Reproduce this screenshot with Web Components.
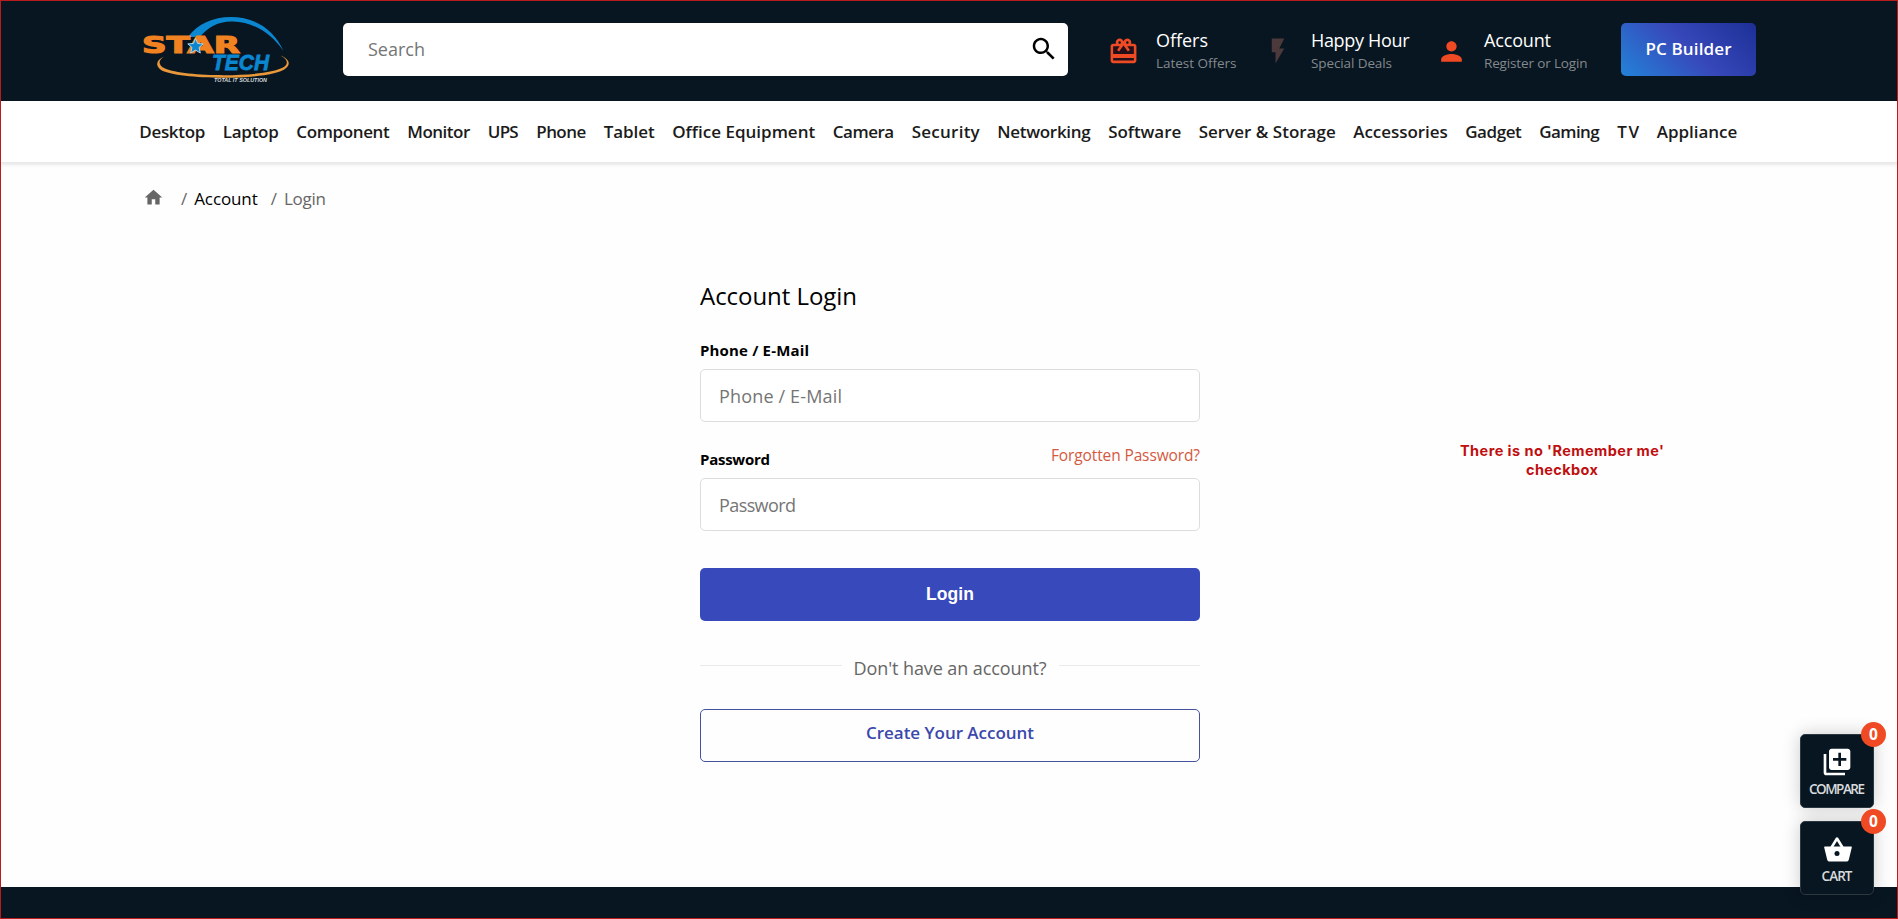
<!DOCTYPE html>
<html lang="en">
<head>
<meta charset="utf-8">
<title>Account Login</title>
<style>
body{margin:0;font-family:"Open Sans","Noto Sans",sans-serif;color:#000;background:#fefefe}
</style>
</head>
<body>
<site-page></site-page>
<script>
function define(name, html, setup){
  const t=document.createElement('template');
  t.innerHTML=html;
  customElements.define(name, class extends HTMLElement{
    connectedCallback(){
      if(this.shadowRoot) return;
      this.attachShadow({mode:'open'}).appendChild(t.content.cloneNode(true));
      if(setup) setup(this,this.shadowRoot);
    }
  });
}

define('site-logo',`<style>:host{display:block;width:155px;height:80px}svg{display:block}</style>
<svg width="155" height="80" viewBox="140 10 155 80">
 <path d="M188 37C197 24 213 17 231 17C254 17 274 29 283.500 51C271 33 253 22 233 21.500C218 21 207 28 200 37Z" fill="#0b86d1"/>
 <path d="M164 56.500C156 60 155 66 161 70C178 80 268 81 285 69C291 65 290 59 280.500 55.500C289 60 288 64.500 283 67.500C264 78 184 77 165 68.500C158 65 158 60.500 164 56.500Z" fill="#e8973a"/>
 <text x="142" y="52.800" font-family="DejaVu Sans" font-weight="bold" font-size="23.500" textLength="98" lengthAdjust="spacingAndGlyphs" fill="#f08222" stroke="#f08222" stroke-width="1.200">STAR</text>
 <path d="M195.500 38.500l2.200 5 5.500.4-4.200 3.600 1.300 5.500-4.800-2.900-4.800 2.900 1.300-5.500-4.200-3.600 5.500-.4z" fill="#0b86d1" stroke="#b8d4e6" stroke-width="1"/>
 <text x="212" y="69.500" font-family="Liberation Sans" font-weight="bold" font-style="italic" font-size="21.500" textLength="57" lengthAdjust="spacingAndGlyphs" fill="#0b86d1" stroke="#0b86d1" stroke-width=".8">TECH</text>
 <text x="214" y="81.800" font-family="Liberation Sans" font-weight="bold" font-style="italic" font-size="5.800" textLength="53" lengthAdjust="spacingAndGlyphs" fill="#d5d9dc">TOTAL IT SOLUTION</text>
</svg>`);

define('search-box',`<style>
:host{display:flex;box-sizing:border-box;width:725px;height:53px;background:#fff;border-radius:5px;padding:0 9px 0 25px;align-items:center;justify-content:space-between;color:#757575;font-size:18px}
fit-text{margin-top:-1px}svg{display:block;margin-top:-1px}</style>
<fit-text w="57">Search</fit-text>
<svg width="30" height="30" viewBox="0 0 24 24"><path d="M15.500 14h-.79l-.28-.27C15.410 12.590 16 11.110 16 9.500 16 5.910 13.090 3 9.500 3S3 5.910 3 9.500 5.910 16 9.500 16c1.610 0 3.090-.59 4.230-1.570l.27.28v.79l5 4.990L20.490 19l-4.990-5zm-6 0C7.010 14 5 11.990 5 9.500S7.010 5 9.500 5 14 7.010 14 9.500 11.990 14 9.500 14z"/></svg>`);

define('header-action',`<style>
:host{display:flex;height:53px;color:#fff}
.icon{flex:none;width:48px;padding-top:13px}
.text{display:flex;flex-direction:column;align-items:flex-start}
.title{font-size:18px;line-height:22px;height:22px;margin-top:6px;font-weight:500}
.sub{font-size:13.500px;line-height:18px;height:18px;margin-top:3px;color:#84898d}
</style><div class="icon"><slot name="icon"></slot></div>
<div class="text"><div class="title"><slot name="title"></slot></div><div class="sub"><slot></slot></div></div>`);

define('site-header',`<style>
:host{display:flex;height:100px;background:#081621;padding-left:139px}
site-logo{margin-top:9px}
search-box{margin:22px 0 0 48px}
header-action{margin-top:22px}
.offers{margin-left:40px;width:155px}.happy{width:173px}.acct{width:185px}
svg{display:block}
.pc{margin-top:22px;width:135px;height:53px;border-radius:5px;background:linear-gradient(45deg,#2383d8 0%,#3749bb 50%,#1d2f96 100%);color:#fff;font-weight:600;font-size:17px;line-height:51px;text-align:center}
</style>
<site-logo></site-logo><search-box></search-box>
<header-action class="offers"><svg slot="icon" width="31" height="31" viewBox="0 0 24 24" fill="#ef4a23"><path d="M4 8h16v6H4zM4 17h16v2H4z" fill="#24101a"/><path d="M20 6h-2.180c.11-.31.18-.65.18-1 0-1.660-1.340-3-3-3-1.050 0-1.960.54-2.500 1.350l-.5.67-.5-.68C10.960 2.540 10.050 2 9 2 7.340 2 6 3.340 6 5c0 .35.07.69.18 1H4c-1.110 0-1.990.89-1.990 2L2 19c0 1.110.89 2 2 2h16c1.110 0 2-.89 2-2V8c0-1.110-.89-2-2-2zm-5-2c.55 0 1 .45 1 1s-.45 1-1 1-1-.45-1-1 .45-1 1-1zM9 4c.55 0 1 .45 1 1s-.45 1-1 1-1-.45-1-1 .45-1 1-1zm11 15H4v-2h16v2zm0-5H4V8h5.080L7 10.830 8.620 12 11 8.760l1-1.360 1 1.360L15.380 12 17 10.830 14.920 8H20v6z"/></svg><fit-text slot="title" w="52">Offers</fit-text><fit-text w="80.5">Latest Offers</fit-text></header-action>
<header-action class="happy"><svg slot="icon" width="30" height="30" viewBox="0 0 24 24" fill="#4b393b"><path d="M7 2v11h3v9l7-12h-4l4-8z"/></svg><fit-text slot="title" w="98.5">Happy Hour</fit-text><fit-text w="81">Special Deals</fit-text></header-action>
<header-action class="acct"><svg slot="icon" width="31" height="31" viewBox="0 0 24 24" fill="#ef4a23"><path d="M12 12c2.210 0 4-1.790 4-4s-1.790-4-4-4-4 1.790-4 4 1.790 4 4 4zm0 2c-2.670 0-8 1.340-8 4v2h16v-2c0-2.660-5.330-4-8-4z"/></svg><fit-text slot="title" w="67">Account</fit-text><fit-text w="103.5">Register or Login</fit-text></header-action>
<div class="pc"><fit-text w="86">PC Builder</fit-text></div>`);

define('site-nav',`<style>
:host{display:flex;height:62px;box-sizing:border-box;padding-left:138.300px;gap:17.500px;background:#fff;border-bottom:1px solid #e9e9e9;box-shadow:0 2px 3px rgba(0,0,0,.09);font-size:17px;line-height:62px;font-weight:600;color:#1b1b1b}
</style>`,(host,root)=>{
  const items=[['Desktop',66],['Laptop',56],['Component',93.5],['Monitor',63],['UPS',31],['Phone',50],['Tablet',51],['Office Equipment',143],['Camera',61.5],['Security',68],['Networking',93.5],['Software',73],['Server & Storage',137],['Accessories',94.5],['Gadget',56.5],['Gaming',60.5],['TV',22],['Appliance',80.5]];
  for(const [label,w] of items){
    const e=document.createElement('fit-text');
    e.setAttribute('w',w);e.textContent=label;root.appendChild(e);
  }
});

define('bread-crumb',`<style>
:host{display:flex;align-items:center;height:24px;margin-top:23px;padding-left:141px;font-size:17px;line-height:24px;color:#666}
svg{display:block;margin:-1px 17px 0 1px}span{padding-top:1px}.a{color:#000;margin:0 13px 0 7px}.b{margin-left:7px}
</style>
<svg width="21" height="21" viewBox="0 0 24 24" fill="#666"><path d="M10 20v-6h4v6h5v-8h3L12 3 2 12h3v8z"/></svg>
<span>/</span><span class="a"><fit-text w="63.5">Account</fit-text></span><span>/</span><span class="b"><fit-text w="42">Login</fit-text></span>`);

define('form-field',`<style>
:host{display:block}
.top{display:flex;justify-content:space-between;height:20px;font-size:15px;line-height:19px;font-weight:700}
.box{box-sizing:border-box;height:53px;border:1px solid #ddd;border-radius:5px;margin-top:8px;padding-left:18px;font-size:18px;line-height:52px;color:#757575;background:#fff}
</style><div class="top"><slot name="label"></slot><slot name="aside"></slot></div><div class="box"><slot></slot></div>`);

define('login-form',`<style>
:host{display:block;width:500px;margin:70px 0 0 699px}
h1{margin:0;font-weight:400;font-size:24px;line-height:32px;height:32px}
.f1{margin-top:29px}.f2{margin-top:28px}
.forgot{font-weight:400;font-size:15.500px;color:#d4593e;margin-top:-4px}
.login{height:53px;margin-top:37px;border-radius:5px;background:#3749bb;color:#fff;text-align:center;font:bold 17.500px/52px "Liberation Sans",sans-serif}
.or{display:flex;margin-top:34px;height:26px;font-size:18px;line-height:26px;color:#666;gap:12px}
.or i{flex:1;height:1px;background:#eaeaea;margin-top:10px}
.create{box-sizing:border-box;height:53px;margin-top:28px;border:1px solid #46539c;border-radius:5px;text-align:center;font-weight:600;font-size:17px;line-height:46px;color:#3b48ac}
</style>
<h1><fit-text w="157">Account Login</fit-text></h1>
<form-field class="f1"><fit-text slot="label" w="109">Phone / E-Mail</fit-text><fit-text w="123">Phone / E-Mail</fit-text></form-field>
<form-field class="f2"><fit-text slot="label" w="70">Password</fit-text><fit-text slot="aside" class="forgot" w="149">Forgotten Password?</fit-text><fit-text w="77">Password</fit-text></form-field>
<div class="login"><fit-text w="48">Login</fit-text></div>
<div class="or"><i></i><fit-text w="193">Don't have an account?</fit-text><i></i></div>
<div class="create"><fit-text w="168">Create Your Account</fit-text></div>`);

define('side-note',`<style>
:host{position:absolute;left:1440px;top:441px;width:244px;text-align:center;font:bold 14.500px/19px Inter,"Liberation Sans",sans-serif;color:#c00f0f}
div{height:19px}</style>
<div><fit-text w="204">There is no 'Remember me'</fit-text></div><div><fit-text w="72">checkbox</fit-text></div>`);

define('float-button',`<style>
:host{position:relative;display:flex;flex-direction:column;align-items:center;box-sizing:border-box;width:74px;height:74px;background:#081621;border:1px solid #2b3842;border-radius:5px;box-shadow:0 0 18px rgba(0,0,0,.2);color:#d8dbdd;font-size:13.500px;font-weight:600;line-height:20px;padding-top:11px}
.label{height:20px;margin-top:1px}
.badge{position:absolute;right:-13px;top:-13px;width:25px;height:25px;border-radius:50%;background:#ef4a23;color:#fff;font-weight:700;font-size:15.500px;line-height:25px;text-align:center}
</style><slot name="icon"></slot><div class="label"><slot></slot></div><div class="badge">0</div>`);

define('float-tools',`<style>
:host{position:absolute;left:1800px;top:734px;display:flex;flex-direction:column;gap:13px}
svg{display:block}</style>
<float-button><svg slot="icon" width="32" height="32" viewBox="0 0 24 24" fill="#fff"><path d="M4 6H2v14c0 1.100.9 2 2 2h14v-2H4V6zm16-4H8c-1.100 0-2 .9-2 2v12c0 1.100.9 2 2 2h12c1.100 0 2-.9 2-2V4c0-1.100-.9-2-2-2zm-1 9h-4v4h-2v-4H9V9h4V5h2v4h4v2z"/></svg><fit-text w="56">COMPARE</fit-text></float-button>
<float-button><svg slot="icon" width="32" height="32" viewBox="0 0 32 32"><path d="M2 13.500h28c.6 0 .9.500.8 1l-3 12.200c-.3 1.100-1.200 1.800-2.300 1.800h-17c-1.100 0-2-.7-2.300-1.800l-3-12.200c-.1-.5.200-1 .8-1z" fill="#fff"/><path d="M10.500 14.500L16 5.500l5.500 9" fill="none" stroke="#fff" stroke-width="2.600" stroke-linejoin="round"/><circle cx="16" cy="20.500" r="2.500" fill="#081621"/></svg><fit-text w="31">CART</fit-text></float-button>`);

define('site-page',`<style>
:host{position:relative;display:flex;flex-direction:column;box-sizing:border-box;width:1898px;height:919px;border:1px solid #b81c1c;overflow:hidden;background:#fefefe}
footer{margin-top:auto;height:31px;background:#081621}
side-note,float-tools{margin:-1px 0 0 -1px}
</style>
<site-header></site-header><site-nav></site-nav><bread-crumb></bread-crumb>
<main><login-form></login-form></main><footer></footer>
<side-note></side-note><float-tools></float-tools>`);

/* Single line of text tracked to an exact width */
customElements.define('fit-text', class extends HTMLElement{
  connectedCallback(){
    if(!this.shadowRoot){
      this.attachShadow({mode:'open'}).innerHTML='<style>:host{display:inline-block;flex:none;white-space:pre}</style><slot></slot>';
    }
    const w=+this.getAttribute('w'), n=this.textContent.length;
    if(!w||n<2) return;
    const s=(w-this.getBoundingClientRect().width)/(n-1);
    this.style.letterSpacing=s+'px';
    this.style.marginRight=-s+'px';
  }
});
</script>
</body>
</html>
